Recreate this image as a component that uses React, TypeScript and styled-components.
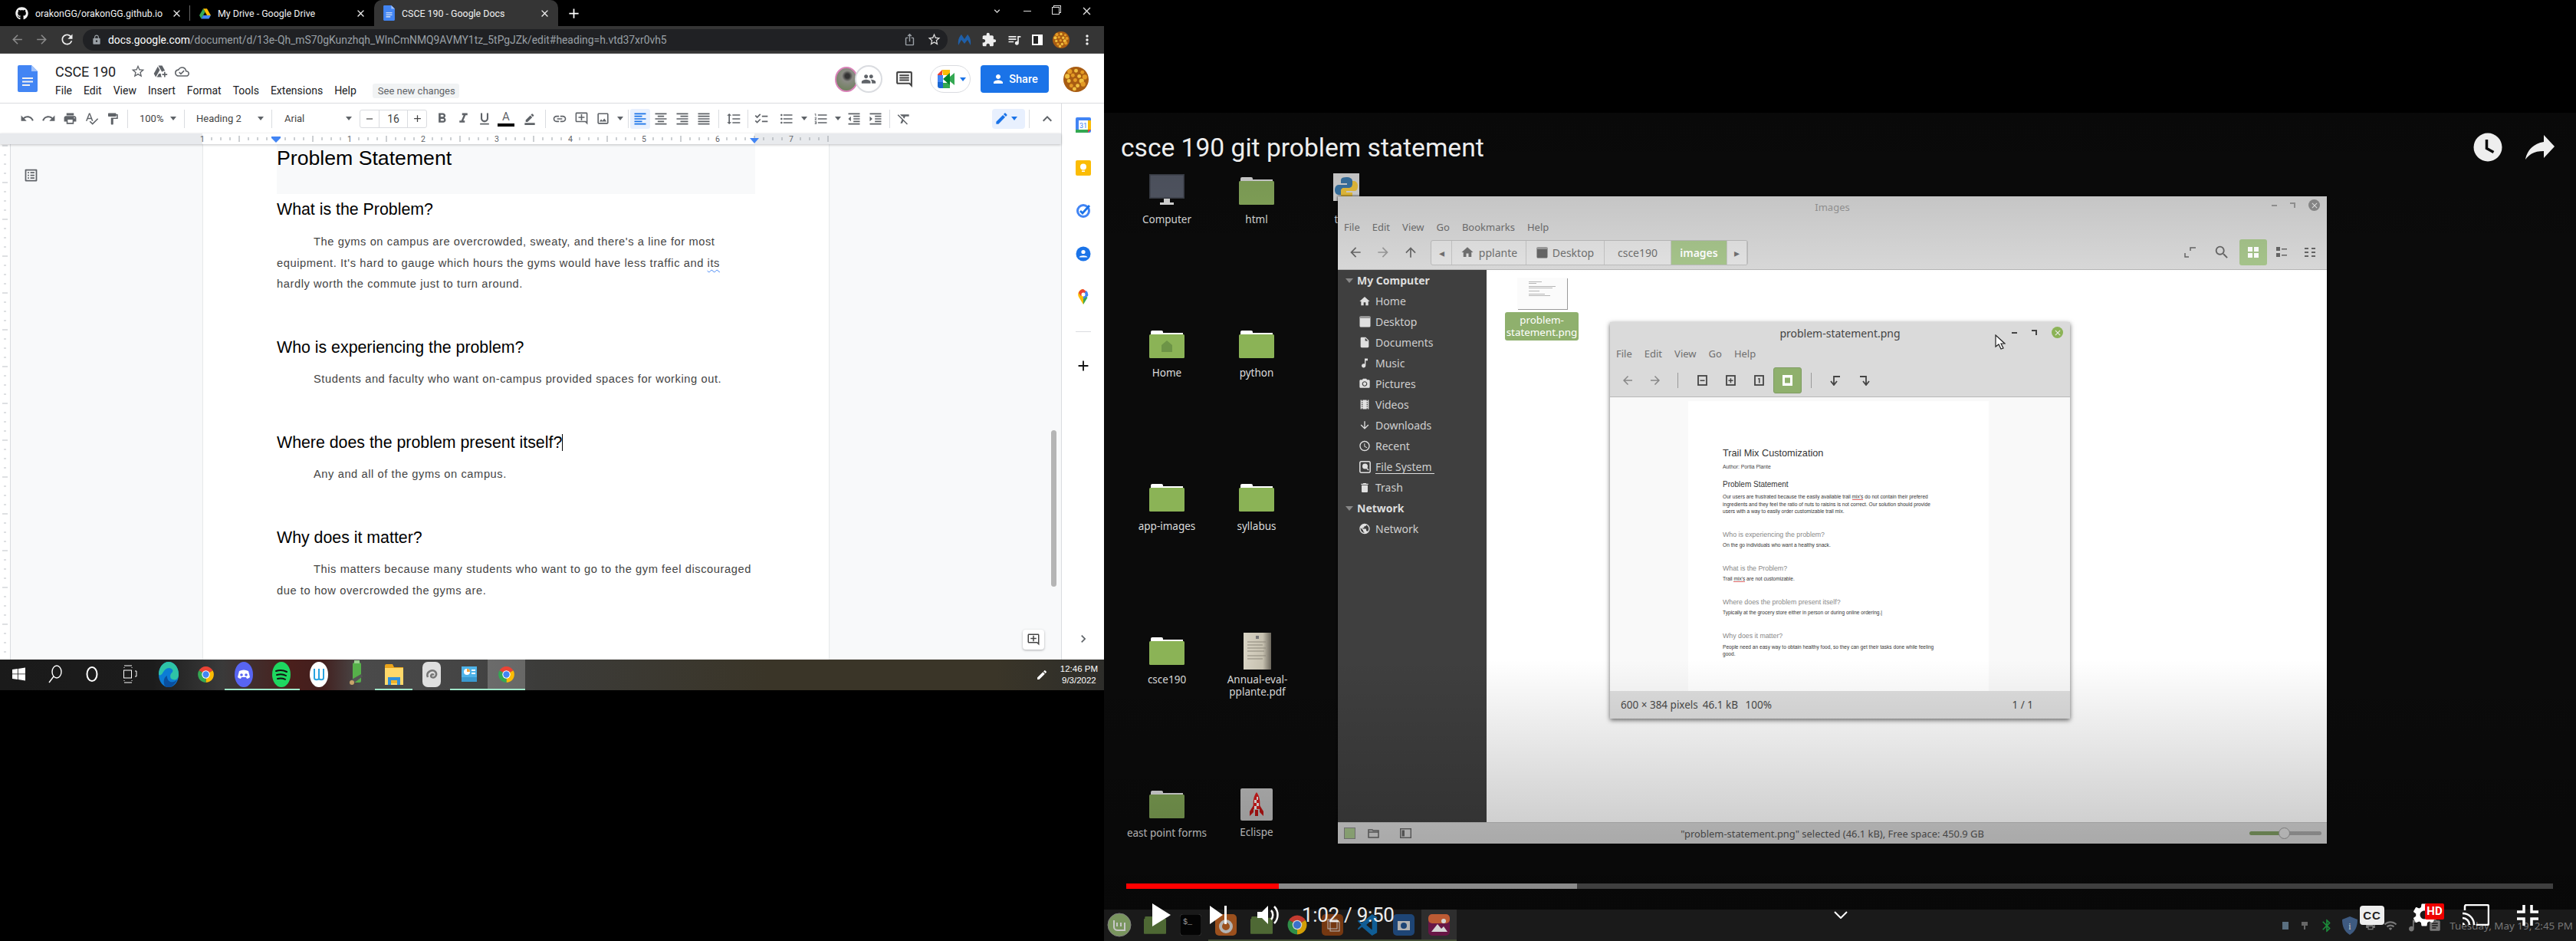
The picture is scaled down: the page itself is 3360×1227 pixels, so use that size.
import React from "react";
import styled, { createGlobalStyle } from "styled-components";
import {
  MdUndo, MdRedo, MdPrint, MdSpellcheck, MdFormatPaint, MdFormatBold, MdFormatItalic, MdFormatUnderlined,
  MdBorderColor, MdLink, MdOutlineAddComment, MdOutlineImage, MdFormatAlignLeft, MdFormatAlignCenter, MdFormatAlignRight,
  MdFormatAlignJustify, MdFormatLineSpacing, MdChecklist, MdFormatListBulleted, MdFormatListNumbered,
  MdFormatIndentDecrease, MdFormatIndentIncrease, MdFormatClear, MdEdit, MdExpandLess,
  MdStarBorder, MdOutlineAddToDrive, MdOutlineCloudDone, MdOutlineComment, MdPeople, MdPerson, MdAdd, MdRemove,
  MdRefresh, MdArrowBack, MdArrowForward, MdLock, MdIosShare, MdExtension, MdQueueMusic, MdMoreVert, MdClose,
  MdHome, MdInsertDriveFile, MdMusicNote, MdCameraAlt, MdLocalMovies, MdArrowDownward, MdAccessTime, MdDelete,
  MdPublic, MdSearch, MdArrowUpward, MdKeyboardArrowDown, MdChevronRight, MdOutlineListAlt,
  MdSettings, MdBluetooth, MdWifi, MdAssignment, MdPrint as MdPrinter,
} from "react-icons/md";
import { FaGithub } from "react-icons/fa";

const Global = createGlobalStyle`
  html, body { margin: 0; padding: 0; background: #000; width: 3360px; height: 1227px; overflow: hidden; }
  * { box-sizing: border-box; }
`;

/* ---------- page ---------- */
const Page = styled.div`
  display: grid; grid-template-columns: 1440px 1920px; width: 3360px; height: 1227px; background: #000;
  font-family: "Liberation Sans", Arial, sans-serif;
`;
const LeftCol = styled.div`display: flex; flex-direction: column; height: 900px;`;

/* ---------- chrome ---------- */
const TabStrip = styled.div`display: flex; align-items: center; height: 34px; background: #000; padding-left: 8px; color: #fff;`;
const Tab = styled.div<{ $active?: boolean }>`
  width: 240px; height: 34px; display: flex; align-items: center; padding: 0 10px 0 12px; gap: 9px;
  font: 12.4px Roboto, sans-serif; position: relative; color: #f1f1f1;
  background: ${p => (p.$active ? "#353535" : "transparent")};
  border-radius: ${p => (p.$active ? "10px 10px 0 0" : "0")};
`;
const TabTitle = styled.span`flex: 1; white-space: nowrap;`;
const TabSep = styled.i`width: 1px; height: 20px; background: #666; margin-left: -1px;`;
const NewTab = styled.div`margin-left: 10px; display: flex; color: #fff;`;
const WinCtrls = styled.div`margin-left: auto; display: flex; align-items: center; height: 28px; align-self: flex-start; color: #ddd; padding-right: 14px; gap: 27px;`;
const RestoreIcon = styled.i`width: 10px; height: 10px; border: 1px solid #ddd; box-shadow: 2px -2px 0 -1px #000, 2px -2px 0 0 #ddd;`;
const MinIcon = styled.i`width: 10px; height: 1px; background: #ddd;`;
const Omni = styled.div`height: 36px; background: #353535; display: flex; align-items: center; color: #8a8a8a; border-bottom: 1px solid #4a4a4a;`;
const NavIcons = styled.div`display: flex; align-items: center; width: 108px; padding-left: 13px; gap: 13px;`;
const UrlPill = styled.div`
  width: 1128px; height: 28px; background: #202124; border-radius: 14px; display: flex; align-items: center;
  padding: 0 8px 0 11px; font: 13.87px Roboto, sans-serif; color: #9aa0a6; gap: 8px; white-space: nowrap;
`;
const UrlText = styled.span`flex: 1;`;
const UrlHost = styled.b`font-weight: 400; color: #fff;`;
const PillShare = styled.span`display: flex; margin-right: 6px;`;
const ExtIcons = styled.div`display: flex; align-items: center; gap: 13px; padding-left: 13px; color: #eee;`;
const SidePanel = styled.i`width: 14px; height: 14px; border: 2px solid #fff; border-right-width: 6px; background: #222;`;

/* ---------- docs header ---------- */
const DocsHeader = styled.div`height: 65px; background: #fff; border-bottom: 1px solid #dadce0; display: flex; align-items: flex-start; padding: 15px 20px 0 23px;`;
const TitleBlock = styled.div`margin-left: 23px; display: flex; flex-direction: column;`;
const TitleRow = styled.div`display: flex; align-items: center; height: 18px; margin-top: -1px; gap: 9px; color: #5f6368;`;
const DocTitle = styled.span`font: 18px Roboto, sans-serif; color: #202124; margin-right: 10px; white-space: nowrap;`;
const MenuRow = styled.div`display: flex; align-items: center; gap: 15px; height: 20px; margin-top: 6px; font: 14px Roboto, sans-serif; color: #202124;`;
const Chip = styled.span`
  margin-left: 6px; background: #f1f3f4; color: #5f6368; font-size: 13px; padding: 0 7px; height: 19px; line-height: 19px;
  border-radius: 3px; white-space: nowrap; width: 113px; text-align: center;
`;
const HeaderRight = styled.div`margin-left: auto; display: flex; align-items: center; height: 36px;`;
const AvatarPhoto = styled.div`width: 30px; height: 33px; border-radius: 50%; border: 2px solid #d982b8; background: radial-gradient(circle at 55% 35%, #333 0 12%, #8b8b85 30%, #6d7f5a 85%);`;
const AvatarChat = styled.div`
  width: 36px; height: 36px; border-radius: 50%; border: 2px solid #dadce0; background: #fff; margin-left: -4px;
  display: flex; align-items: center; justify-content: center; color: #5f6368;
`;
const CommentBtn = styled.div`margin-left: 16px; color: #444; display: flex;`;
const MeetPill = styled.div`width: 53px; height: 36px; border-radius: 18px; border: 1px solid #dadce0; margin-left: 21px; display: flex; align-items: center; padding-left: 9px;`;
const ShareBtn = styled.div`
  width: 89px; height: 36px; background: #1a73e8; color: #fff; border-radius: 4px; margin-left: 13px; display: flex; align-items: center;
  justify-content: center; gap: 5px; font: 500 14.5px Roboto, sans-serif;
`;
const AvatarWrap = styled.div`margin-left: 19px; display: flex;`;

/* ---------- docs body ---------- */
const DocsMain = styled.div`flex: 1; display: flex; min-height: 0; background: #fff;`;
const EditorCol = styled.div`flex: 1; display: flex; flex-direction: column; min-width: 0;`;
const Toolbar = styled.div`height: 39px; display: flex; align-items: center; padding-left: 21px; color: #5f6368; background: #fff;`;
const ToolBtn = styled.div<{ $w?: number; $ml?: number; $on?: boolean }>`
  width: ${p => p.$w ?? 28}px; height: 26px; flex: none; display: flex; align-items: center; justify-content: center;
  margin-left: ${p => p.$ml ?? 0}px; border-radius: 3px; background: ${p => (p.$on ? "#e8f0fe" : "transparent")};
  color: ${p => (p.$on ? "#1a73e8" : "inherit")};
`;
const Sep = styled.i<{ $l?: number; $r?: number }>`width: 1px; height: 24px; background: #dadce0; flex: none; margin: 0 ${p => p.$r ?? 5}px 0 ${p => p.$l ?? 5}px;`;
const Select = styled.div<{ $w: number; $pl: number }>`
  width: ${p => p.$w}px; padding-left: ${p => p.$pl}px; flex: none; display: flex; align-items: center; justify-content: space-between;
  font: 13px Roboto, sans-serif; color: #444; overflow: hidden;
`;
const SelectText = styled.span`white-space: nowrap;`;
const Caret = styled.i`width: 0; height: 0; border: 4px solid transparent; border-top: 5px solid #5f6368; border-bottom: 0; margin: 0 5px; flex: none;`;
const SizeBox = styled.div`
  width: 88px; height: 24px; margin-left: 5px; flex: none; border: 1px solid #dadce0; border-radius: 3px; display: grid; grid-template-columns: 24px 1fr 24px;
  align-items: center; justify-items: center; font: 14px Roboto, sans-serif; color: #444;
`;
const SizeVal = styled.span`border: solid #dadce0; border-width: 0 1px; width: 100%; text-align: center; line-height: 22px;`;
const ColorA = styled.div`display: flex; flex-direction: column; align-items: center; font: 15px Roboto, sans-serif; line-height: 15px;`;
const ColorBar = styled.i`width: 22px; height: 4px; background: #000; margin-top: 1px;`;
const EditPill = styled.div`margin-left: auto; width: 43px; height: 26px; border-radius: 4px; background: #e8f0fe; color: #1a73e8; display: flex; align-items: center; padding-left: 3px; flex: none;`;
const BlueCaret = styled(Caret)`border-top-color: #1a73e8; margin: 0 0 0 3px;`;
const RulerRow = styled.div`height: 14px; background: #e8eaed; display: flex; box-shadow: 0 1px 3px rgba(60,64,67,.3); position: relative; z-index: 2;`;
const Canvas = styled.div`flex: 1; display: flex; background: #f8f9fa; position: relative; min-height: 0; overflow: hidden;`;
const VRuler = styled.div`width: 14px; flex: none; background: #fff; border-right: 1px solid #dadce0;`;
const PageSheet = styled.div`
  width: 816px; margin-left: 251px; background: #fff; box-shadow: 0 0 2px rgba(60,64,67,.25); padding: 0 96px; flex: none;
  font-family: "Liberation Sans", Arial, sans-serif;
`;
const H1Block = styled.div`height: 65px; background: #f8f9fa; font-size: 26.67px; line-height: 36px; color: #000; white-space: nowrap;`;
const H2 = styled.h2<{ $first?: boolean }>`font-size: 21.33px; font-weight: 400; line-height: 26px; margin: ${p => (p.$first ? 7 : 55.5)}px 0 0; color: #000; white-space: nowrap;`;
const Para = styled.p<{ $first?: boolean }>`font-size: 14.67px; letter-spacing: .58px; line-height: 27.6px; color: #444; margin: ${p => (p.$first ? 16 : 15)}px 0 0; text-indent: 48px;`;
const Squiggle = styled.span`text-decoration: underline wavy #4285f4 1px; text-underline-offset: 3px;`;
const Cursor = styled.i`display: inline-block; width: 1px; height: 22px; background: #000; vertical-align: -4px;`;
const OutlineBtn = styled.div`position: absolute; left: 30px; top: 30px; color: #5f6368; display: flex;`;
const ScrollThumb = styled.div`position: absolute; left: 1371px; top: 373px; width: 7px; height: 204px; background: #b5b5b5; border-radius: 4px;`;
const ExploreBtn = styled.div`position: absolute; left: 1334px; top: 633px; width: 28px; height: 26px; border-radius: 4px; background: #fff; box-shadow: 0 1px 3px rgba(60,64,67,.4); color: #444; display: flex; align-items: center; justify-content: center;`;
const SideRail = styled.div`width: 56px; flex: none; border-left: 1.5px solid #dadce0; background: #fff; display: flex; flex-direction: column; align-items: center; padding: 0 0 17px; position: relative;`;
const RailItem = styled.div`height: 56px; width: 100%; display: flex; align-items: center; justify-content: center; flex: none;`;
const RailSep = styled.i`width: 20px; height: 1px; background: #dadce0; margin: 17px 0 33px;`;
const RailEnd = styled.div`margin-top: auto; color: #5f6368; display: flex;`;

/* ---------- win taskbar ---------- */
const Taskbar = styled.div`
  height: 40px; display: flex; position: relative;
  background: linear-gradient(90deg, #1a1a1a 0, #1c1c1c 200px, #3a3a3a 290px, #4a1f1c 380px, #421f1e 420px, #4a4a4a 470px, #444 620px, #3c3c3a 700px, #3a3528 1000px, #3a3528 1300px, #2d2d2a 1440px);
`;
const TbCell = styled.div<{ $w?: number; $run?: boolean; $active?: boolean }>`
  width: ${p => p.$w ?? 49}px; height: 40px; display: flex; align-items: center; justify-content: center; flex: none; color: #fff;
  background: ${p => (p.$active ? "rgba(255,255,255,.22)" : "transparent")};
  border-bottom: 2px solid ${p => (p.$run ? "#9fe6c8" : "transparent")};
`;
const Tray = styled.div`margin-left: auto; display: flex; align-items: center; color: #fff; gap: 16px; padding-right: 8px; font: 11.5px "Liberation Sans", sans-serif; text-align: center; line-height: 15px;`;

/* ---------- video ---------- */
const Video = styled.div`position: relative; height: 1227px; display: flex; flex-direction: column; overflow: hidden; background: #0b0b0b; color: #eee;`;
const TopBlack = styled.div`height: 147px; background: #000; flex: none;`;
const Desktop = styled.div`position: relative; flex: 1; background: #0b0b0b;`;
const DeskItem = styled.div<{ $x: number; $y: number }>`
  position: absolute; left: ${p => p.$x}px; top: ${p => p.$y}px; width: 120px; display: flex; flex-direction: column; align-items: center;
  font: 13.5px/16px "Noto Sans", sans-serif; color: #ddd; text-align: center;
`;
const DeskIconBox = styled.div<{ $mb?: number }>`height: 48px; display: flex; align-items: flex-end; justify-content: center; margin-bottom: ${p => p.$mb ?? 11}px;`;
const FmWin = styled.div`
  position: absolute; left: 305px; top: 109px; width: 1290px; height: 844px; background: #d8d8d8; display: flex; flex-direction: column;
  font-family: "Noto Sans", sans-serif; color: #666; box-shadow: 0 0 3px #000;
`;
const FmTitle = styled.div`height: 28px; display: flex; align-items: center; justify-content: center; color: #9a9a9a; font-size: 13px; position: relative;`;
const FmCtrls = styled.div`position: absolute; right: 9px; top: 4px; display: flex; align-items: center; gap: 17px; color: #999;`;
const CloseDot = styled.div<{ $c: string }>`width: 15px; height: 15px; border-radius: 50%; background: ${p => p.$c}; color: #eee; display: flex; align-items: center; justify-content: center;`;
const MinDash = styled.i`width: 7px; height: 2px; background: currentColor;`;
const MaxDot = styled.i`width: 7px; height: 7px; border-top: 2px solid currentColor; border-right: 2px solid currentColor;`;
const FmMenu = styled.div<{ $h?: number }>`height: ${p => p.$h ?? 23}px; display: flex; align-items: center; padding-left: 8px; gap: 16px; font-size: 13px; color: #6f6f6f;`;
const FmTools = styled.div`height: 45px; display: flex; align-items: center; padding-left: 13px; border-bottom: 1px solid #b5b5b5; color: #666;`;
const NavGroup = styled.div`display: flex; gap: 16px; width: 108px;`;
const PathBar = styled.div`display: flex; height: 33px; border: 1px solid #bbb; border-radius: 3px; background: #e2e2e2; font-size: 14px; color: #707070; flex: none;`;
const PathSeg = styled.div<{ $w: number; $on?: boolean }>`
  width: ${p => p.$w}px; display: flex; align-items: center; justify-content: center; gap: 6px; flex: none; border-right: 1px solid #c4c4c4;
  background: ${p => (p.$on ? "#a6c48b" : "transparent")}; color: ${p => (p.$on ? "#fff" : "inherit")}; font-weight: ${p => (p.$on ? 600 : 400)};
`;
const FmRight = styled.div`margin-left: auto; display: flex; align-items: center; padding-right: 4px; color: #666;`;
const ViewBtn = styled.div<{ $on?: boolean; $w?: number }>`
  width: ${p => p.$w ?? 36}px; height: 34px; display: flex; align-items: center; justify-content: center; border-radius: 3px; color: ${p => (p.$on ? "#fff" : "#666")};
  background: ${p => (p.$on ? "#a6c48b" : "transparent")};
`;
const FmBody = styled.div`flex: 1; display: flex; min-height: 0;`;
const FmSide = styled.div`width: 194px; flex: none; background: #3f3f3f; color: #cfcfcf; font-size: 14px;`;
const SideHead = styled.div`height: 27px; display: flex; align-items: center; font-weight: 700; padding-left: 10px; gap: 5px; color: #ddd;`;
const Tri = styled.i`width: 0; height: 0; border: 5px solid transparent; border-top: 6px solid #888; border-bottom: 0;`;
const SideRow = styled.div`height: 27px; display: flex; align-items: center; padding-left: 27px; gap: 6px; white-space: nowrap;`;
const SideIcon = styled.span`width: 16px; display: flex; justify-content: center; color: #e0e0e0;`;
const Underlined = styled.span`border-bottom: 1.5px solid #ddd; padding: 0 3px 0 0; line-height: 17px;`;
const FmFiles = styled.div`flex: 1; background: #fff; padding: 10px 0 0 24px;`;
const FileTile = styled.div`width: 96px; display: flex; flex-direction: column; align-items: center;`;
const Thumb = styled.div`width: 65px; height: 41px; background: #fbfbfb; box-shadow: 1px 1px 0 #999; padding: 5px 15px; display: flex; flex-direction: column; gap: 1px;`;
const ThumbLine = styled.i<{ $w: number; $mt?: number }>`height: 1px; width: ${p => p.$w}%; background: #b5b5b5; margin-top: ${p => p.$mt ?? 0}px;`;
const FileLabel = styled.div`margin-top: 4px; width: 96px; height: 37px; background: #8fb06d; color: #fff; border-radius: 3px; text-align: center; font-size: 13.4px; line-height: 16px; padding-top: 2px; white-space: nowrap;`;
const FmStatus = styled.div`height: 28px; display: flex; align-items: center; font-size: 12.9px; color: #555; border-top: 1px solid #c4c4c4; position: relative; background: #d6d6d6;`;
const StatusLeft = styled.div`width: 194px; flex: none; display: flex; align-items: center; padding-left: 8px; gap: 16px; color: #666; > :last-child { margin-left: 11px; }`;
const StatusGreen = styled.div`width: 15px; height: 15px; background: #a6c48b; border: 1px solid #888; display: flex;`;
const StatusText = styled.div`flex: 1; text-align: center; margin-left: -194px; white-space: nowrap; margin-right: -101px;`;
const Slider = styled.div`width: 94px; height: 5px; margin-right: 7px; border-radius: 3px; flex: none; background: linear-gradient(90deg, #7f9c63 0 49%, #a5a5a5 49%); position: relative;`;
const Knob = styled.i`position: absolute; left: 38px; top: -5px; width: 15px; height: 15px; border-radius: 50%; background: #ddd; border: 1px solid #999;`;

const Viewer = styled.div`
  position: absolute; left: 355px; top: 164px; width: 600px; height: 517px; background: #dadada; display: flex; flex-direction: column;
  box-shadow: 0 2px 6px rgba(0,0,0,.6); color: #4a4a4a; z-index: 2;
`;
const VTitle = styled.div`height: 28px; display: flex; align-items: center; justify-content: center; font-size: 14px; position: relative; color: #444;`;
const VCtrls = styled(FmCtrls)`color: #444; right: 9px; top: 6px; gap: 19px;`;
const VTools = styled.div`height: 44px; display: flex; align-items: center; padding-left: 14px; border-bottom: 1px solid #b8b8b8; color: #555;`;
const VBtn = styled.div<{ $on?: boolean; $w?: number }>`
  width: ${p => p.$w ?? 37}px; height: 34px; flex: none; display: flex; align-items: center; justify-content: center; border-radius: 3px;
  background: ${p => (p.$on ? "#8fb06d" : "transparent")}; border: ${p => (p.$on ? "1px solid #7f9c63" : "0")}; color: ${p => (p.$on ? "#fff" : "inherit")};
`;
const VSep = styled.i<{ $l: number; $r: number }>`width: 1px; height: 20px; background: #999; margin: 0 ${p => p.$r}px 0 ${p => p.$l}px; flex: none;`;
const VContent = styled.div`flex: 1; background: #f9f9f9; padding: 5px 0 0 102px; min-height: 0;`;
const MiniDoc = styled.div`width: 392px; height: 100%; background: #fff; padding: 60px 45px 0; font-family: "Liberation Sans", sans-serif; color: #444;`;
const MiniH1 = styled.div`font-size: 12.7px; line-height: 16px; color: #333; white-space: nowrap;`;
const MiniAuthor = styled.div`font-size: 6.8px; line-height: 10px; margin-top: 5px; white-space: nowrap;`;
const MiniH2 = styled.div`font-size: 10px; line-height: 12px; margin-top: 12px; color: #333; white-space: nowrap;`;
const MiniH3 = styled.div`font-size: 8.8px; line-height: 11px; margin-top: 20px; color: #888; white-space: nowrap;`;
const MiniP = styled.div<{ $top?: number }>`font-size: 6.6px; line-height: 9.6px; margin-top: ${p => p.$top ?? 3.5}px; color: #333; white-space: pre-line;`;
const RedLine = styled.span`border-bottom: 1px solid #d66;`;
const VStatus = styled.div`height: 36px; display: flex; align-items: center; font-size: 13.5px; padding: 0 48px 0 14px; gap: 6px; background: #dedede; white-space: nowrap;`;
const VPage = styled.span`margin-left: auto;`;
const PointerWrap = styled.div`position: absolute; left: 502px; top: 16px; z-index: 3; display: flex;`;

const TopShade = styled.div`position: absolute; left: 0; right: 0; top: 147px; height: 210px; background: linear-gradient(rgba(0,0,0,.18), rgba(0,0,0,0)); pointer-events: none; z-index: 3;`;
const BottomShade = styled.div`position: absolute; left: 0; right: 0; top: 860px; height: 326px; background: linear-gradient(rgba(0,0,0,0), rgba(0,0,0,.2) 70%, rgba(0,0,0,.25)); pointer-events: none; z-index: 3;`;
const TitleOverlay = styled.div`position: absolute; left: 0; right: 0; top: 167px; height: 50px; display: flex; align-items: center; justify-content: space-between; padding: 0 28px 0 22px; z-index: 4;`;
const VideoTitle = styled.div`font: 33.6px Roboto, sans-serif; color: #eee; white-space: nowrap;`;
const TitleIcons = styled.div`display: flex; align-items: center; gap: 30px;`;
const Controls = styled.div`position: absolute; left: 29px; right: 30px; top: 1152px; z-index: 5; display: flex; flex-direction: column;`;
const ProgressTrack = styled.div`height: 7px; background: #3f3f3f; display: flex;`;
const ProgressSeg = styled.div<{ $w: number; $c: string }>`width: ${p => p.$w}px; background: ${p => p.$c}; flex: none;`;
const CtrlRow = styled.div`height: 68px; display: flex; align-items: center; position: relative;`;
const CtrlIcon = styled.div<{ $ml: number }>`margin-left: ${p => p.$ml}px; display: flex; flex: none; color: #fff;`;
const TimeText = styled.div`margin-left: 28px; font: 26px Roboto, sans-serif; color: #eee; white-space: nowrap; width: 118px; letter-spacing: -.3px;`;
const HdBadge = styled.div`position: absolute; right: -8px; top: 3px; width: 25px; height: 21px; background: #e00; color: #fff; font: 700 15px/21px Roboto, sans-serif; text-align: center; border-radius: 2px;`;
const GearWrap = styled.div`position: relative; margin-left: 34px; display: flex; color: #fff;`;
const CcBox = styled.div`margin-left: auto; width: 32px; height: 25px; border-radius: 4px; background: #eee; color: #222; font: 700 15px/25px "Liberation Sans", sans-serif; text-align: center; letter-spacing: 1px;`;

const MintPanel = styled.div`height: 41px; flex: none; background: #1a1a1a; display: flex; align-items: center; position: relative;`;
const MintApps = styled.div`display: flex; align-items: center; margin-left: -3px; opacity: .82;`;
const MintCell = styled.div<{ $active?: boolean; $run?: boolean }>`
  width: 46.3px; height: 41px; display: flex; align-items: center; justify-content: center; flex: none; position: relative;
  background: ${p => (p.$active ? "#333" : "transparent")}; border-bottom: 2px solid ${p => (p.$run ? "#4c5a3c" : "transparent")};
`;
const MintTray = styled.div`margin-left: auto; display: flex; align-items: center; gap: 10px; color: #777; font: 13.4px "Noto Sans", sans-serif; padding-right: 4px; white-space: nowrap;`;

/* ---------- drawings ---------- */
const Chrome = ({ s = 22 }: { s?: number }) => (
  <svg width={s} height={s} viewBox="0 0 48 48">
    <path d="M24 24L6.700 14A20 20 0 0 1 41.300 14Z" fill="#ea4335" />
    <path d="M24 24L41.300 14A20 20 0 0 1 24 44Z" fill="#fbbc04" />
    <path d="M24 24L24 44A20 20 0 0 1 6.700 14Z" fill="#34a853" />
    <circle cx="24" cy="24" r="10" fill="#fff" /><circle cx="24" cy="24" r="8" fill="#4285f4" />
  </svg>
);
const Drive = () => (
  <svg width="15" height="15" viewBox="0 0 24 24">
    <path d="M8 2h8l8 14h-8z" fill="#fbbc04" /><path d="M8 2L0 16l4 7 8-14z" fill="#34a853" /><path d="M8 16h16l-4 7H4z" fill="#4285f4" />
  </svg>
);
const DocsIcon = ({ w = 26, h = 35 }: { w?: number; h?: number }) => (
  <svg width={w} height={h} viewBox="0 0 26 35">
    <path d="M2 0h16l8 8v25a2 2 0 0 1-2 2H2a2 2 0 0 1-2-2V2a2 2 0 0 1 2-2z" fill="#4285f4" />
    <path d="M18 0l8 8h-8z" fill="#a1c2fa" />
    <path d="M6 16h14v2H6zM6 20.500h14v2H6zM6 25h10v2H6z" fill="#f1f1f1" />
  </svg>
);
const popcorn = [[8,6],[16,5],[24,7],[5,12],[12,11],[20,12],[27,13],[7,18],[15,17],[23,18],[10,24],[18,24],[25,22],[14,28]];
const Popcorn = ({ w, h }: { w: number; h: number }) => (
  <svg width={w} height={h} viewBox="0 0 32 32">
    <circle cx="16" cy="16" r="16" fill="#a85c12" />
    {popcorn.map(([x, y], i) => <circle key={i} cx={x} cy={y} r={i % 3 === 0 ? 3 : 2.4} fill={i % 2 ? "#f0c040" : "#e39a24"} />)}
  </svg>
);
const Meet = () => (
  <svg width="26" height="24" viewBox="0 0 26 24">
    <path d="M6 0h10v7H7v-.5z" fill="#fbbc04" /><path d="M0 6l6-6v7H0z" fill="#ea4335" /><path d="M0 7h7v9H0z" fill="#4285f4" />
    <path d="M0 16h7v8H3a3 3 0 0 1-3-3z" fill="#1967d2" /><path d="M7 17h9v7H7z" fill="#34a853" />
    <path d="M16 4v16l-9-8z" fill="#00832d" /><path d="M16 9l6-5v16l-6-5z" fill="#34a853" />
  </svg>
);
const Edge = () => (
  <svg width="26" height="33" viewBox="0 0 24 24" preserveAspectRatio="none">
    <circle cx="12" cy="12" r="12" fill="#0c7cd5" />
    <path d="M0 12A12 12 0 0 1 24 12c0 3-2 5-5 5-3 0-5-1-5-3 0-4 3-3 3-6-2-3-7-3-10 0-3 3-4 6-7 4z" fill="#2ec4a6" />
    <path d="M9 24c-4-2-4-9 1-11 0 6 6 8 12 4-2 4-8 9-13 7z" fill="#0a4f9e" />
  </svg>
);
const Discord = () => (
  <svg width="24" height="33" viewBox="0 0 24 33">
    <ellipse cx="12" cy="16.500" rx="12" ry="16.500" fill="#5865f2" />
    <path d="M6 12c4-2 8-2 12 0l2 8c-1 1-3 2-4 2l-1-2H9l-1 2c-1 0-3-1-4-2z" fill="#fff" />
    <circle cx="9" cy="17" r="1.800" fill="#5865f2" /><circle cx="15" cy="17" r="1.800" fill="#5865f2" />
  </svg>
);
const Spotify = () => (
  <svg width="24" height="33" viewBox="0 0 24 33">
    <ellipse cx="12" cy="16.500" rx="12" ry="16.500" fill="#1ed760" />
    <path d="M5 12c5-1.500 10-1 14 1M6 17c4-1 9-.7 12 1M7 22c3-.7 7-.5 10 .800" stroke="#111" strokeWidth="2" fill="none" strokeLinecap="round" />
  </svg>
);
const WIcon = () => (
  <svg width="24" height="33" viewBox="0 0 24 33">
    <ellipse cx="12" cy="16.500" rx="12" ry="16.500" fill="#fff" />
    <path d="M6 9v12c0 3 6 3 6 0V9v12c0 3 6 3 6 0V9" stroke="#29a3e0" strokeWidth="2" fill="none" />
  </svg>
);
const Battery = () => (
  <svg width="22" height="36" viewBox="0 0 22 36">
    <rect x="6" y="3" width="11" height="26" rx="2" fill="#56b04a" /><rect x="8" y="0" width="7" height="4" fill="#9ad08f" />
    <path d="M3 26l14-8 2 3-13 10z" fill="#555" /><circle cx="5" cy="29" r="3" fill="#c8a46a" />
  </svg>
);
const Explorer = () => (
  <svg width="24" height="27" viewBox="0 0 24 27">
    <path d="M0 2a2 2 0 0 1 2-2h8l2 4h12v23H0z" fill="#eaa31a" /><rect y="5" width="24" height="22" fill="#ffd869" />
    <path d="M4 27V17h16v10h-4v-6H8v6z" fill="#3190d9" /><rect x="8" y="21" width="8" height="4" fill="#f0b429" />
  </svg>
);
const GreyApp = () => (
  <svg width="24" height="33" viewBox="0 0 24 33">
    <rect width="24" height="33" rx="7" fill="#dfdfdf" />
    <path d="M7 20c-3-7 6-11 10-7 3 4-1 9-5 7-2-2 0-5 3-3" fill="none" stroke="#777" strokeWidth="2.500" />
  </svg>
);
const ControlApp = () => (
  <svg width="20" height="20" viewBox="0 0 20 20">
    <rect width="20" height="20" fill="#4fb3e8" /><rect y="14" width="20" height="6" fill="#3a9ad0" />
    <circle cx="7" cy="7" r="4" fill="#fff" /><path d="M7 7V3a4 4 0 0 1 4 4z" fill="#f2a23a" />
    <path d="M13 4h5v2h-5zM13 8h5v2h-5z" fill="#fff" />
  </svg>
);
const WinLogo = () => (
  <svg width="17" height="22" viewBox="0 0 16 16"><path d="M0 2.300L6.500 1.400V7.500H0zM7.300 1.300L16 0V7.500H7.300zM0 8.300H6.500V14.500L0 13.600zM7.300 8.300H16V16L7.300 14.700z" fill="#fff" /></svg>
);
const SearchGlass = () => (
  <svg width="18" height="24" viewBox="0 0 18 24"><ellipse cx="11" cy="9" rx="6" ry="8" fill="none" stroke="#fff" strokeWidth="1.400" /><path d="M7 15L1 23" stroke="#fff" strokeWidth="1.400" /></svg>
);
const Cortana = () => <svg width="16" height="22" viewBox="0 0 16 22"><ellipse cx="8" cy="11" rx="6.500" ry="9" fill="none" stroke="#fff" strokeWidth="2" /></svg>;
const TaskView = () => (
  <svg width="18" height="24" viewBox="0 0 18 24"><path d="M1 1h10M1 23h10M1 3v1M11 3v1M1 20v1M11 20v1M15 8h2v7h-2" stroke="#fff" fill="none" /><rect x=".5" y="7" width="10" height="10" fill="none" stroke="#fff" /></svg>
);
const Folder = ({ c, tab, w = 46, h = 37, children }: { c: string; tab: string; w?: number; h?: number; children?: React.ReactNode }) => (
  <svg width={w} height={h} viewBox="0 0 46 37">
    <path d="M2 5V3a2 2 0 0 1 2-2h12a2 2 0 0 1 2 2v1h26v6H2z" fill={tab} />
    <rect y="6" width="46" height="31" rx="1.500" fill={c} />
    {children}
  </svg>
);
const GF = "#87a95c";
const Monitor = () => (
  <svg width="46" height="40" viewBox="0 0 46 40">
    <rect width="46" height="32" fill="#3b3f48" /><rect x="1.500" y="1.500" width="43" height="29" fill="#545966" />
    <path d="M19 32h8v5h5v3H14v-3h5z" fill="#ddd" />
  </svg>
);
const Python = () => (
  <svg width="34" height="36" viewBox="0 0 34 36">
    <rect width="34" height="36" fill="#d9d9d9" />
    <path d="M17 5c-7 0-7 3-7 5v3h8v2H7c-3 0-5 3-5 7 0 3 2 6 5 6h3v-4c0-3 2-5 5-5h6c3 0 4-2 4-4v-5c0-3-3-5-8-5z" fill="#3b77a8" />
    <path d="M18 33c7 0 7-3 7-5v-3h-8v-2h11c3 0 4-3 4-7 0-3-2-6-5-6h-2v4c0 3-2 5-5 5h-6c-3 0-4 2-4 4v5c0 3 3 5 8 5z" fill="#f0c53d" />
  </svg>
);
const PdfThumb = () => (
  <svg width="36" height="48" viewBox="0 0 36 48">
    <defs><linearGradient id="pg" x1="0" x2="1"><stop offset="0" stopColor="#d9d4c5" /><stop offset=".7" stopColor="#c7c1b0" /><stop offset="1" stopColor="#6b665c" /></linearGradient></defs>
    <rect width="36" height="48" fill="url(#pg)" />
    <path d="M5 12h24M5 16h20M5 20h24M5 24h22M5 30h24M5 34h20" stroke="#8c877a" strokeWidth="1" /><path d="M16 4h4v4h-4z" fill="#777" />
  </svg>
);
const Rocket = () => (
  <svg width="42" height="42" viewBox="0 0 42 42">
    <rect width="42" height="42" rx="2" fill="#bdbdbd" />
    <path d="M21 5c4 5 5 12 4 22h-8c-1-10 0-17 4-22z" fill="#d41c1c" />
    <path d="M18 15h3v4h-3zM21 19h3v4h-3zM18 23h3v4h-3zM21 11h2v4h-2z" fill="#eee" />
    <path d="M17 22l-5 8v6l5-5zM25 22l5 8v6l-5-5zM19 28h4v8h-4z" fill="#b81414" />
  </svg>
);
const ClockIcon = () => (
  <svg width="38" height="38" viewBox="0 0 38 38"><circle cx="19" cy="19" r="18.500" fill="#eee" /><path d="M17.500 9v11.500l9 5" fill="none" stroke="#0b0b0b" strokeWidth="3.500" /></svg>
);
const ShareArrow = () => (
  <svg width="38" height="32" viewBox="0 0 38 32"><path d="M24 0l14 15-14 15v-9C13 21 6 24 0 32c2-11 10-21 24-23z" fill="#eee" /></svg>
);
const Play = () => <svg width="24" height="30" viewBox="0 0 24 30"><path d="M0 0l24 15L0 30z" fill="#fff" /></svg>;
const Next = () => <svg width="22" height="24" viewBox="0 0 22 24"><path d="M0 0l17 12L0 24zM19 0h3v24h-3z" fill="#fff" /></svg>;
const Volume = () => (
  <svg width="30" height="26" viewBox="0 0 30 26"><path d="M0 9h6l8-8v24l-8-8H0z" fill="#fff" /><path d="M18 7c3 3 3 9 0 12M22 2c6 6 6 16 0 22" stroke="#fff" strokeWidth="2.500" fill="none" /></svg>
);
const Cast = () => (
  <svg width="35" height="28" viewBox="0 0 35 28"><path d="M3 8V3a2 2 0 0 1 2-2h27a2 2 0 0 1 2 2v22a2 2 0 0 1-2 2H18" fill="none" stroke="#fff" strokeWidth="2.500" /><path d="M0 12c9 0 15 7 15 15M0 18c5 0 9 4 9 9" stroke="#fff" strokeWidth="2.500" fill="none" /><path d="M0 24a3 3 0 0 1 3 3H0z" fill="#fff" /></svg>
);
const FsExit = () => (
  <svg width="28" height="27" viewBox="0 0 28 27"><path d="M9 0v9H0M19 0v9h9M9 27v-9H0M19 27v-9h9" fill="none" stroke="#fff" strokeWidth="3.500" /></svg>
);
const Mouse = () => (
  <svg width="14" height="20" viewBox="0 0 14 20"><path d="M1 1v15l4-3 3 6 3-1-3-6h5z" fill="#fff" stroke="#222" strokeWidth="1.200" /></svg>
);
const DesktopGlyph = ({ c = "currentColor" }: { c?: string }) => (
  <svg width="15" height="15" viewBox="0 0 15 15"><rect x=".5" y=".5" width="14" height="14" rx="1.500" fill={c} /><rect x=".5" y=".5" width="14" height="2.500" fill="#999" /></svg>
);
const DiskGlyph = () => (
  <svg width="15" height="16" viewBox="0 0 15 16"><rect x=".8" y=".8" width="13.400" height="14.400" rx="2" fill="none" stroke="#e0e0e0" strokeWidth="1.500" /><circle cx="7.500" cy="7" r="3.500" fill="#e0e0e0" /><path d="M8 8l4 4" stroke="#e0e0e0" strokeWidth="1.500" /></svg>
);

/* Ruler */
const RulerSvg = () => {
  const ticks: React.ReactNode[] = [];
  for (let x = 264, i = 0; x <= 1080; x += 12, i++) {
    const major = i % 8 === 0; const half = i % 4 === 0;
    if (major) continue;
    ticks.push(<line key={x} x1={x} x2={x} y1={half ? 3 : 5} y2={half ? 11 : 9} stroke="#9aa0a6" strokeWidth={1} />);
  }
  const labels = [[264, "1"], [456, "1"], [552, "2"], [648, "3"], [744, "4"], [840, "5"], [936, "6"], [1032, "7"]] as [number, string][];
  return (
    <svg width="1384" height="14" viewBox="0 0 1384 14">
      <rect x="264" width="720" height="14" fill="#fff" />
      {ticks}
      {labels.map(([x, t]) => <text key={x} x={x} y="11" textAnchor="middle" fontSize="10.500" fontFamily="Roboto, sans-serif" fill="#5f6368">{t}</text>)}
      <path d="M354 4h12v2l-6 6-6-6z" fill="#4285f4" />
      <path d="M978 6h12l-6 7z" fill="#4285f4" />
    </svg>
  );
};
const VRulerSvg = () => {
  const t: React.ReactNode[] = [];
  for (let y = 2, i = 0; y < 672; y += 12, i++) t.push(<line key={y} x1={i % 4 === 0 ? 3 : 5} x2={i % 4 === 0 ? 10 : 8} y1={y} y2={y} stroke="#bdc1c6" />);
  return <svg width="13" height="672" viewBox="0 0 13 672">{t}</svg>;
};

/* Rail icons */
const CalIcon = () => (
  <svg width="20" height="20" viewBox="0 0 20 20"><rect width="20" height="20" rx="2" fill="#4285f4" /><rect x="4" y="4" width="12" height="12" fill="#fff" /><rect x="16" y="4" width="4" height="12" fill="#fbbc04" /><rect y="16" width="16" height="4" fill="#34a853" /><path d="M16 16h4l-4 4z" fill="#ea4335" /><text x="10" y="14" fontSize="9" textAnchor="middle" fill="#4285f4" fontFamily="Roboto, sans-serif">31</text></svg>
);
const KeepIcon = () => (
  <svg width="20" height="20" viewBox="0 0 20 20"><rect width="20" height="20" rx="2" fill="#fbbc04" /><circle cx="10" cy="8.500" r="4" fill="#fff" /><rect x="8" y="13.500" width="4" height="1.500" fill="#fff" /></svg>
);
const TasksIcon = () => (
  <svg width="20" height="20" viewBox="0 0 20 20"><circle cx="10" cy="10" r="7.500" fill="none" stroke="#4285f4" strokeWidth="3" /><path d="M6 10l3 3 9-10" fill="none" stroke="#1a73e8" strokeWidth="2.800" /></svg>
);
const ContactIcon = () => (
  <svg width="20" height="20" viewBox="0 0 20 20"><circle cx="10" cy="10" r="9.500" fill="#1a73e8" /><circle cx="10" cy="7.500" r="2.600" fill="#fff" /><path d="M4.500 14.500c1-3 10-3 11 0z" fill="#fff" /></svg>
);
const MapsIcon = () => (
  <svg width="14" height="20" viewBox="0 0 14 20"><path d="M7 20L1.500 11A7 7 0 0 1 7 0z" fill="#fbbc04" /><path d="M7 20l5.500-9L7 7z" fill="#34a853" /><path d="M1 5A7 7 0 0 1 7 0l4 3-7 6z" fill="#ea4335" /><path d="M11 2a7 7 0 0 1 2 7l-6 4V7z" fill="#4285f4" /><circle cx="7" cy="7" r="2.500" fill="#fff" /></svg>
);

/* data */
const sideRows: [React.ReactNode, string][] = [
  [<MdHome size={18} />, "Home"], [<DesktopGlyph />, "Desktop"], [<MdInsertDriveFile size={17} />, "Documents"], [<MdMusicNote size={17} />, "Music"],
  [<MdCameraAlt size={17} />, "Pictures"], [<MdLocalMovies size={17} />, "Videos"], [<MdArrowDownward size={17} />, "Downloads"], [<MdAccessTime size={17} />, "Recent"],
];

export default function App() {
  return (
    <Page>
      <Global />
      <LeftCol>
        <TabStrip>
          <Tab><FaGithub size={17} /><TabTitle>orakonGG/orakonGG.github.io</TabTitle><MdClose size={15} /></Tab>
          <TabSep />
          <Tab><Drive /><TabTitle>My Drive - Google Drive</TabTitle><MdClose size={15} /></Tab>
          <Tab $active><DocsIcon w={15} h={20} /><TabTitle>CSCE 190 - Google Docs</TabTitle><MdClose size={15} /></Tab>
          <NewTab><MdAdd size={21} /></NewTab>
          <WinCtrls>
            <MdKeyboardArrowDown size={15} />
            <MinIcon /><RestoreIcon /><MdClose size={17} />
          </WinCtrls>
        </TabStrip>
        <Omni>
          <NavIcons><MdArrowBack size={19} /><MdArrowForward size={19} /><MdRefresh size={21} color="#eee" /></NavIcons>
          <UrlPill>
            <MdLock size={14} />
            <UrlText><UrlHost>docs.google.com</UrlHost>/document/d/13e-Qh_mS70gKunzhqh_WInCmNMQ9AVMY1tz_5tPgJZk/edit#heading=h.vtd37xr0vh5</UrlText>
            <PillShare><MdIosShare size={17} /></PillShare><MdStarBorder size={19} color="#ddd" />
          </UrlPill>
          <ExtIcons>
            <svg width="18" height="16" viewBox="0 0 18 16"><path d="M1 15C0 7 3 3 5 1l4 6 4-6c2 2 5 6 4 14l-4-7-4 5-4-5z" fill="#1f5fa8" /></svg>
            <MdExtension size={20} /><MdQueueMusic size={20} /><SidePanel />
            <Popcorn w={22} h={24} />
            <MdMoreVert size={20} />
          </ExtIcons>
        </Omni>
        <DocsHeader>
          <DocsIcon />
          <TitleBlock>
            <TitleRow>
              <DocTitle>CSCE 190</DocTitle>
              <MdStarBorder size={20} /><MdOutlineAddToDrive size={20} /><MdOutlineCloudDone size={19} />
            </TitleRow>
            <MenuRow>
              <span>File</span><span>Edit</span><span>View</span><span>Insert</span><span>Format</span><span>Tools</span><span>Extensions</span><span>Help</span>
              <Chip>See new changes</Chip>
            </MenuRow>
          </TitleBlock>
          <HeaderRight>
            <AvatarPhoto /><AvatarChat><MdPeople size={20} /></AvatarChat>
            <CommentBtn><MdOutlineComment size={25} /></CommentBtn>
            <MeetPill><Meet /><BlueCaret /></MeetPill>
            <ShareBtn><MdPerson size={18} />Share</ShareBtn>
            <AvatarWrap><Popcorn w={33} h={33} /></AvatarWrap>
          </HeaderRight>
        </DocsHeader>
        <DocsMain>
          <EditorCol>
            <Toolbar>
              <ToolBtn><MdUndo size={19} /></ToolBtn><ToolBtn><MdRedo size={19} /></ToolBtn><ToolBtn><MdPrint size={19} /></ToolBtn>
              <ToolBtn><MdSpellcheck size={19} /></ToolBtn><ToolBtn><MdFormatPaint size={18} /></ToolBtn>
              <Sep />
              <Select $w={63} $pl={10}><SelectText>100%</SelectText><Caret /></Select>
              <Sep />
              <Select $w={103} $pl={10}><SelectText>Heading 2</SelectText><Caret /></Select>
              <Sep />
              <Select $w={104} $pl={11}><SelectText>Arial</SelectText><Caret /></Select>
              <SizeBox><MdRemove size={14} /><SizeVal>16</SizeVal><MdAdd size={15} /></SizeBox>
              <ToolBtn $ml={5}><MdFormatBold size={21} /></ToolBtn><ToolBtn><MdFormatItalic size={21} /></ToolBtn><ToolBtn><MdFormatUnderlined size={20} /></ToolBtn>
              <ToolBtn><ColorA>A<ColorBar /></ColorA></ToolBtn><ToolBtn $ml={3}><MdBorderColor size={16} /></ToolBtn>
              <Sep $l={6} $r={4} />
              <ToolBtn><MdLink size={20} /></ToolBtn><ToolBtn><MdOutlineAddComment size={19} /></ToolBtn><ToolBtn><MdOutlineImage size={19} /></ToolBtn>
              <Caret />
              <Sep $l={1} $r={2} />
              <ToolBtn $w={26} $on><MdFormatAlignLeft size={20} /></ToolBtn><ToolBtn><MdFormatAlignCenter size={20} /></ToolBtn><ToolBtn><MdFormatAlignRight size={20} /></ToolBtn><ToolBtn><MdFormatAlignJustify size={20} /></ToolBtn>
              <Sep />
              <ToolBtn><MdFormatLineSpacing size={20} /></ToolBtn>
              <Sep $l={4} $r={3} />
              <ToolBtn><MdChecklist size={20} /></ToolBtn>
              <ToolBtn $ml={5}><MdFormatListBulleted size={20} /></ToolBtn><Caret />
              <ToolBtn $w={26}><MdFormatListNumbered size={20} /></ToolBtn><Caret />
              <ToolBtn $ml={-2}><MdFormatIndentDecrease size={20} /></ToolBtn><ToolBtn><MdFormatIndentIncrease size={20} /></ToolBtn>
              <Sep $l={4} $r={4} />
              <ToolBtn><MdFormatClear size={20} /></ToolBtn>
              <EditPill><MdEdit size={19} /><BlueCaret /></EditPill>
              <Sep />
              <ToolBtn $w={28} $ml={4}><MdExpandLess size={24} /></ToolBtn>
              <ToolBtn $w={4} />
            </Toolbar>
            <RulerRow><RulerSvg /></RulerRow>
            <Canvas>
              <VRuler><VRulerSvg /></VRuler>
              <PageSheet>
                <H1Block>Problem Statement</H1Block>
                <H2 $first>What is the Problem?</H2>
                <Para $first>The gyms on campus are overcrowded, sweaty, and there's a line for most equipment. It's hard to gauge which hours the gyms would have less traffic and <Squiggle>its</Squiggle> hardly worth the commute just to turn around.</Para>
                <H2>Who is experiencing the problem?</H2>
                <Para>Students and faculty who want on-campus provided spaces for working out.</Para>
                <H2>Where does the problem present itself?<Cursor /></H2>
                <Para>Any and all of the gyms on campus.</Para>
                <H2>Why does it matter?</H2>
                <Para>This matters because many students who want to go to the gym feel discouraged due to how overcrowded the gyms are.</Para>
              </PageSheet>
              <OutlineBtn><MdOutlineListAlt size={21} /></OutlineBtn>
              <ScrollThumb />
              <ExploreBtn><MdOutlineAddComment size={18} /></ExploreBtn>
            </Canvas>
          </EditorCol>
          <SideRail>
            <RailItem><CalIcon /></RailItem><RailItem><KeepIcon /></RailItem><RailItem><TasksIcon /></RailItem><RailItem><ContactIcon /></RailItem><RailItem><MapsIcon /></RailItem>
            <RailSep />
            <MdAdd size={22} color="#111" />
            <RailEnd><MdChevronRight size={20} /></RailEnd>
          </SideRail>
        </DocsMain>
        <Taskbar>
          <TbCell $w={48}><WinLogo /></TbCell><TbCell $w={48}><SearchGlass /></TbCell><TbCell $w={48}><Cortana /></TbCell><TbCell $w={51}><TaskView /></TbCell>
          <TbCell><Edge /></TbCell><TbCell><Chrome s={25} /></TbCell><TbCell $run><Discord /></TbCell><TbCell $run><Spotify /></TbCell>
          <TbCell><WIcon /></TbCell><TbCell><Battery /></TbCell><TbCell $run><Explorer /></TbCell><TbCell><GreyApp /></TbCell><TbCell $run><ControlApp /></TbCell><TbCell $run $active><Chrome s={25} /></TbCell>
          <Tray><MdEdit size={16} /><div>12:46 PM<br />9/3/2022</div></Tray>
        </Taskbar>
      </LeftCol>

      <Video>
        <TopBlack />
        <Desktop>
          <DeskItem $x={22} $y={72}><DeskIconBox><Monitor /></DeskIconBox>Computer</DeskItem>
          <DeskItem $x={139} $y={72}><DeskIconBox><Folder c={GF} tab="#d9d9d9" /></DeskIconBox>html</DeskItem>
          <DeskItem $x={256} $y={67}><DeskIconBox $mb={16}><Python /></DeskIconBox>te.py</DeskItem>
          <DeskItem $x={22} $y={272}><DeskIconBox><Folder c="#8bb356" tab="#fff"><path d="M23 14l7 6v9H16v-9z" fill="#6d9447" /></Folder></DeskIconBox>Home</DeskItem>
          <DeskItem $x={139} $y={272}><DeskIconBox><Folder c="#8bb356" tab="#fff" /></DeskIconBox>python</DeskItem>
          <DeskItem $x={22} $y={472}><DeskIconBox><Folder c="#8bb356" tab="#fff" /></DeskIconBox>app-images</DeskItem>
          <DeskItem $x={139} $y={472}><DeskIconBox><Folder c="#8bb356" tab="#fff" /></DeskIconBox>syllabus</DeskItem>
          <DeskItem $x={22} $y={672}><DeskIconBox><Folder c="#8bb356" tab="#fff" /></DeskIconBox>csce190</DeskItem>
          <DeskItem $x={140} $y={678}><DeskIconBox $mb={5}><PdfThumb /></DeskIconBox>Annual-eval-<br />pplante.pdf</DeskItem>
          <DeskItem $x={22} $y={872}><DeskIconBox><Folder c="#7ea154" tab="#ddd" /></DeskIconBox>east point forms</DeskItem>
          <DeskItem $x={139} $y={875}><DeskIconBox $mb={7}><Rocket /></DeskIconBox>Eclispe</DeskItem>

          <FmWin>
            <FmTitle>
              Images
              <FmCtrls><MinDash /><MaxDot /><CloseDot $c="#8f8f8f"><MdClose size={12} /></CloseDot></FmCtrls>
            </FmTitle>
            <FmMenu><span>File</span><span>Edit</span><span>View</span><span>Go</span><span>Bookmarks</span><span>Help</span></FmMenu>
            <FmTools>
              <NavGroup><MdArrowBack size={20} /><MdArrowForward size={20} color="#999" /><MdArrowUpward size={20} /></NavGroup>
              <PathBar>
                <PathSeg $w={27}>◂</PathSeg>
                <PathSeg $w={97}><MdHome size={18} />pplante</PathSeg>
                <PathSeg $w={102}><DesktopGlyph c="#666" />Desktop</PathSeg>
                <PathSeg $w={87}>csce190</PathSeg>
                <PathSeg $w={73} $on>images</PathSeg>
                <PathSeg $w={26}>▸</PathSeg>
              </PathBar>
              <FmRight>
                <ViewBtn><svg width="16" height="14" viewBox="0 0 16 14"><path d="M1 8v5h5M15 1H8v4" fill="none" stroke="#666" strokeWidth="1.500" /></svg></ViewBtn>
                <ViewBtn $w={46}><MdSearch size={22} /></ViewBtn>
                <ViewBtn $on><svg width="14" height="14" viewBox="0 0 14 14"><path d="M0 0h6v6H0zM8 0h6v6H8zM0 8h6v6H0zM8 8h6v6H8z" fill="#fff" /></svg></ViewBtn>
                <ViewBtn $w={38}><svg width="14" height="14" viewBox="0 0 14 14"><path d="M0 0h5v5H0zM0 8h5v5H0zM7 2h7v1.500H7zM7 10h7v1.500H7z" fill="#666" /></svg></ViewBtn>
                <ViewBtn><svg width="14" height="14" viewBox="0 0 14 14"><path d="M0 1h5v2H0zM9 1h5v2H9zM0 6h5v2H0zM9 6h5v2H9zM0 11h5v2H0zM9 11h5v2H9z" fill="#666" /></svg></ViewBtn>
              </FmRight>
            </FmTools>
            <FmBody>
              <FmSide>
                <SideHead><Tri />My Computer</SideHead>
                {sideRows.map(([icon, label]) => <SideRow key={label}><SideIcon>{icon}</SideIcon>{label}</SideRow>)}
                <SideRow><SideIcon><DiskGlyph /></SideIcon><Underlined>File System</Underlined></SideRow>
                <SideRow><SideIcon><MdDelete size={18} /></SideIcon>Trash</SideRow>
                <SideHead><Tri />Network</SideHead>
                <SideRow><SideIcon><MdPublic size={17} /></SideIcon>Network</SideRow>
              </FmSide>
              <FmFiles>
                <FileTile>
                  <Thumb>
                    <ThumbLine $w={50} /><ThumbLine $w={30} /><ThumbLine $w={100} $mt={2} /><ThumbLine $w={90} /><ThumbLine $w={40} $mt={2} /><ThumbLine $w={60} $mt={2} /><ThumbLine $w={80} />
                  </Thumb>
                  <FileLabel>problem-<br />statement.png</FileLabel>
                </FileTile>
              </FmFiles>
            </FmBody>
            <FmStatus>
              <StatusLeft>
                <StatusGreen />
                <svg width="15" height="13" viewBox="0 0 15 13"><path d="M1 2h5l1 1h7v9H1zM1 5h13" fill="none" stroke="#666" strokeWidth="1.500" /></svg>
                <svg width="15" height="13" viewBox="0 0 15 13"><rect x=".7" y=".7" width="13.600" height="11.600" fill="none" stroke="#666" strokeWidth="1.400" /><rect x="2.500" y="2.500" width="3.500" height="8" fill="#666" /></svg>
              </StatusLeft>
              <StatusText>"problem-statement.png" selected (46.1 kB), Free space: 450.9 GB</StatusText>
              <Slider><Knob /></Slider>
            </FmStatus>

            <Viewer>
              <VTitle>
                problem-statement.png
                <VCtrls><MinDash /><MaxDot /><CloseDot $c="#8bb356"><MdClose size={12} /></CloseDot></VCtrls>
              </VTitle>
              <FmMenu $h={26}><span>File</span><span>Edit</span><span>View</span><span>Go</span><span>Help</span></FmMenu>
              <VTools>
                <MdArrowBack size={18} color="#888" /><VBtn $w={18} /><MdArrowForward size={18} color="#888" />
                <VSep $l={20} $r={13} />
                <VBtn><svg width="13" height="14" viewBox="0 0 13 14"><rect x="1" y="1" width="11" height="12" fill="none" stroke="#444" strokeWidth="1.800" /><path d="M3.500 6.500h6v1.500h-6z" fill="#444" /></svg></VBtn>
                <VBtn><svg width="13" height="14" viewBox="0 0 13 14"><rect x="1" y="1" width="11" height="12" fill="none" stroke="#444" strokeWidth="1.800" /><path d="M3.500 6.500h6v1.500h-6zM5.700 4.200h1.500v6H5.700z" fill="#444" /></svg></VBtn>
                <VBtn><svg width="13" height="14" viewBox="0 0 13 14"><rect x="1" y="1" width="11" height="12" fill="none" stroke="#444" strokeWidth="1.800" /><path d="M5.500 4h2v6.500h-1.500V5.500h-1z" fill="#444" /></svg></VBtn>
                <VBtn $on><svg width="13" height="14" viewBox="0 0 13 14"><rect width="13" height="14" fill="#fff" /><rect x="3" y="3.500" width="7" height="7" fill="#8fb06d" /></svg></VBtn>
                <VSep $l={12} $r={19} />
                <VBtn $w={24}><svg width="14" height="15" viewBox="0 0 14 15"><path d="M13 3H5v10M1 9l4 5 4-5" fill="none" stroke="#444" strokeWidth="1.800" /></svg></VBtn>
                <VBtn $w={14} />
                <VBtn $w={24}><svg width="14" height="15" viewBox="0 0 14 15"><path d="M1 3h8v10M5 9l4 5 4-5" fill="none" stroke="#444" strokeWidth="1.800" /></svg></VBtn>
              </VTools>
              <VContent>
                <MiniDoc>
                  <MiniH1>Trail Mix Customization</MiniH1>
                  <MiniAuthor>Author: Portia Plante</MiniAuthor>
                  <MiniH2>Problem Statement</MiniH2>
                  <MiniP $top={5}>Our users are frustrated because the easily available trail <RedLine>mix's</RedLine> do not contain their prefered{"\n"}ingredients and they feel the ratio of nuts to raisins is not correct.  Our solution should provide{"\n"}users with a way to easily order customizable trail mix.</MiniP>
                  <MiniH3>Who is experiencing the problem?</MiniH3>
                  <MiniP>On the go individuals who want a healthy snack.</MiniP>
                  <MiniH3>What is the Problem?</MiniH3>
                  <MiniP>Trail <RedLine>mix's</RedLine> are not customizable.</MiniP>
                  <MiniH3>Where does the problem present itself?</MiniH3>
                  <MiniP>Typically at the grocery store either in person or during online ordering.|</MiniP>
                  <MiniH3>Why does it matter?</MiniH3>
                  <MiniP>People need an easy way to obtain healthy food, so they can get their tasks done while feeling{"\n"}good.</MiniP>
                </MiniDoc>
              </VContent>
              <VStatus><span>600 × 384 pixels</span><span>46.1 kB</span><span>&nbsp;100%</span><VPage>1 / 1</VPage></VStatus>
              <PointerWrap><Mouse /></PointerWrap>
            </Viewer>
          </FmWin>
        </Desktop>
        <MintPanel>
          <MintApps>
            <MintCell>
              <svg width="32" height="32" viewBox="0 0 32 32"><circle cx="16" cy="16" r="15" fill="#8fb06d" stroke="#999" /><path d="M9 10v9c0 3 3 4 5 4h9V13M13 18v-5M18 18v-5" fill="none" stroke="#eee" strokeWidth="2" /></svg>
            </MintCell>
            <MintCell><Folder c="#5a7a3a" tab="#5a7a3a" w={29} h={26} /></MintCell>
            <MintCell><svg width="28" height="28" viewBox="0 0 28 28"><rect width="28" height="28" rx="4" fill="#000" stroke="#333" /><text x="4" y="13" fontSize="10" fill="#bbb" fontFamily="Liberation Mono, monospace">$_</text></svg></MintCell>
            <MintCell $run><svg width="28" height="28" viewBox="0 0 28 28"><rect width="28" height="28" rx="5" fill="#b85c1e" /><circle cx="14" cy="16" r="7" fill="none" stroke="#d5d5d5" strokeWidth="4" /></svg></MintCell>
            <MintCell $run><Folder c="#5a7a3a" tab="#5a7a3a" w={29} h={26} /></MintCell>
            <MintCell $run><Chrome s={30} /></MintCell>
            <MintCell $run><svg width="28" height="28" viewBox="0 0 28 28"><rect width="28" height="28" rx="5" fill="#8a3f10" /><rect x="8" y="7" width="12" height="12" fill="none" stroke="#ddd" /><rect x="11" y="10" width="12" height="12" fill="none" stroke="#ddd" /></svg></MintCell>
            <MintCell $run><svg width="28" height="30" viewBox="0 0 28 32"><path d="M20 1l7 4v22l-7 4L6 19l-5 4-1-2 5-5-5-5 1-2 5 4zm0 8l-8 7 8 7z" fill="#0f6cb0" /></svg></MintCell>
            <MintCell $run><svg width="28" height="28" viewBox="0 0 28 28"><rect width="28" height="28" rx="5" fill="#1f4f8a" /><rect x="6" y="9" width="16" height="12" fill="#d5d5d5" /><circle cx="14" cy="15" r="4" fill="#1f4f8a" /></svg></MintCell>
            <MintCell $active $run><svg width="28" height="28" viewBox="0 0 28 28"><rect width="28" height="28" rx="5" fill="#7a1650" /><rect width="28" height="12" rx="5" fill="#e06a3a" /><path d="M4 23l8-10 5 6 3-3 5 7z" fill="#fff" /><circle cx="20" cy="9" r="3" fill="#fff" /></svg></MintCell>
          </MintApps>
          <MintTray>
            <svg width="10" height="10" viewBox="0 0 10 10"><rect width="8" height="10" fill="#5a6f80" /></svg>
            <svg width="18" height="10" viewBox="0 0 18 10"><path d="M5 0h8v5H5zM8 5h2v5H8z" fill="#666" /></svg>
            <MdBluetooth size={20} color="#1c8a3a" />
            <svg width="20" height="24" viewBox="0 0 20 24"><path d="M10 0l10 4c0 9-3 16-10 20C3 20 0 13 0 4z" fill="#3e5a80" /><text x="10" y="17" fontSize="12" textAnchor="middle" fill="#ccc" fontFamily="Liberation Serif, serif">i</text></svg>
            <MdPrinter size={14} /><MdWifi size={18} /><MdMusicNote size={20} /><MdAssignment size={18} />
            <span>Tuesday, May 19, 2:45 PM</span>
          </MintTray>
        </MintPanel>

        <TopShade />
        <BottomShade />
        <TitleOverlay>
          <VideoTitle>csce 190 git problem statement</VideoTitle>
          <TitleIcons><ClockIcon /><ShareArrow /></TitleIcons>
        </TitleOverlay>
        <Controls>
          <ProgressTrack><ProgressSeg $w={199} $c="#f00" /><ProgressSeg $w={389} $c="#8a8a8a" /></ProgressTrack>
          <CtrlRow>
            <CtrlIcon $ml={34}><Play /></CtrlIcon>
            <CtrlIcon $ml={51}><Next /></CtrlIcon>
            <CtrlIcon $ml={40}><Volume /></CtrlIcon>
            <TimeText>1:02 / 9:50</TimeText>
            <CtrlIcon $ml={576}><svg width="18" height="10" viewBox="0 0 18 10"><path d="M1 1l8 8 8-8" fill="none" stroke="#fff" strokeWidth="2" /></svg></CtrlIcon>
            <CcBox>CC</CcBox>
            <GearWrap><MdSettings size={36} /><HdBadge>HD</HdBadge></GearWrap>
            <CtrlIcon $ml={32}><Cast /></CtrlIcon>
            <CtrlIcon $ml={36}><FsExit /></CtrlIcon>
            <CtrlIcon $ml={19}><i /></CtrlIcon>
          </CtrlRow>
        </Controls>
      </Video>
    </Page>
  );
}
